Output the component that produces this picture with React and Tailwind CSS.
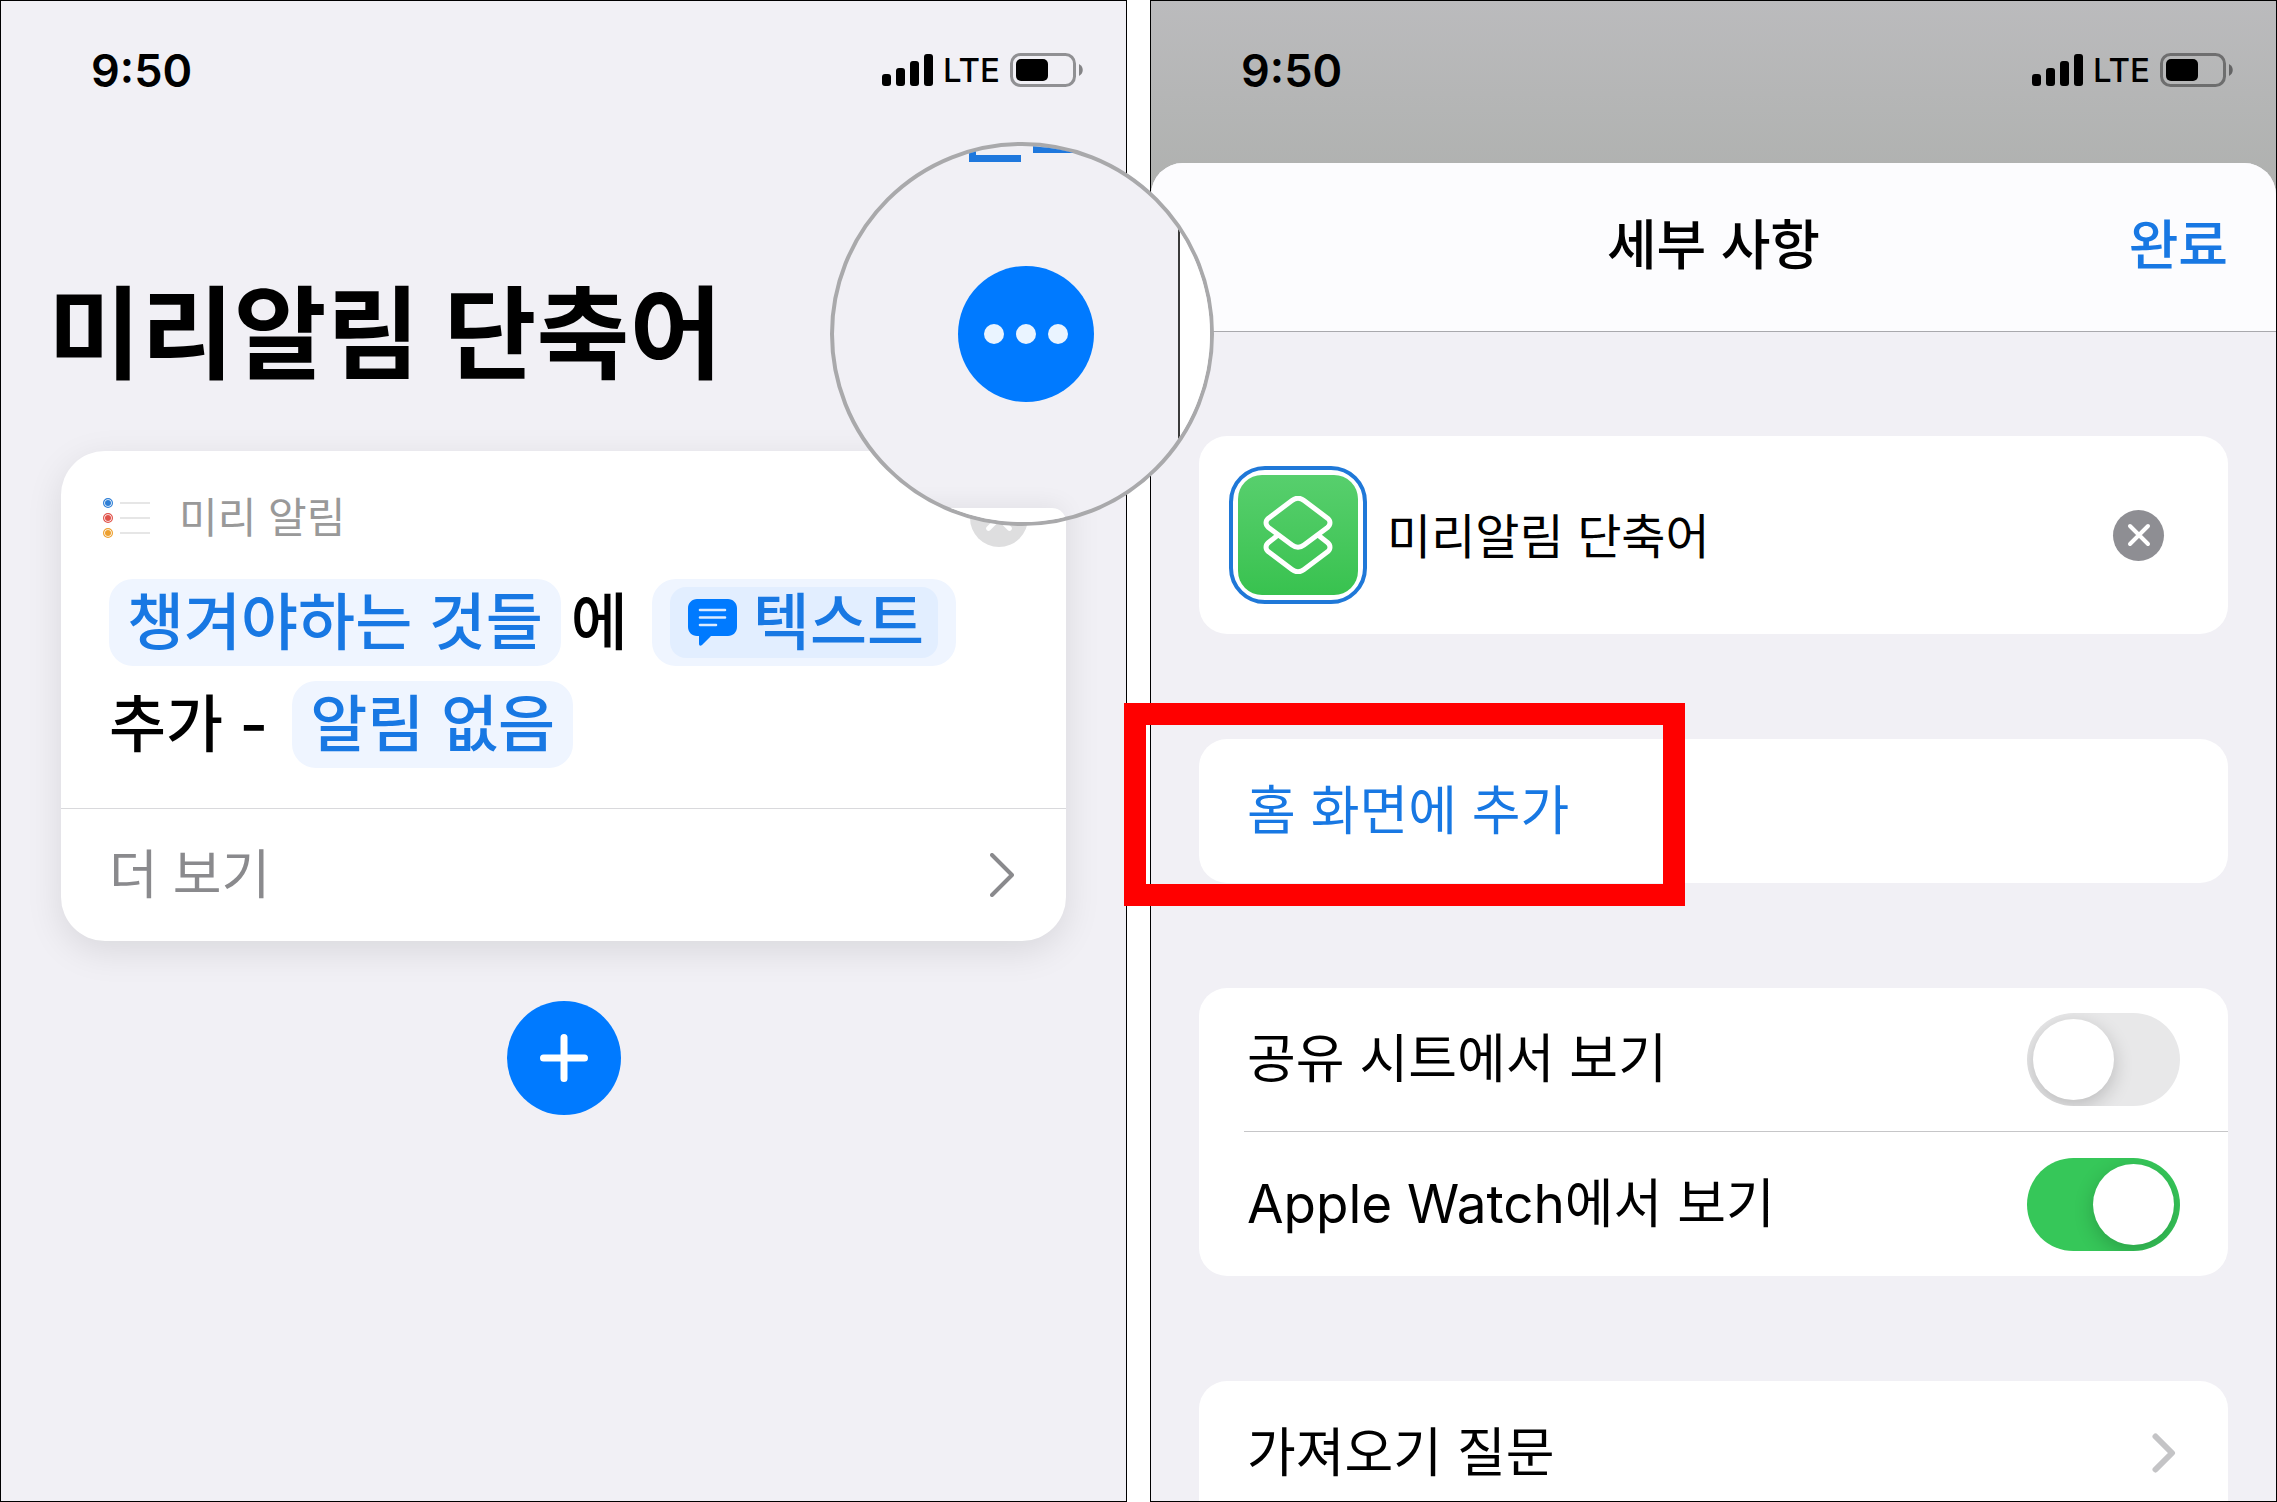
import { useState } from "react";

function StatusBar() {
  return (
    <div className="flex h-[138px] shrink-0 items-center justify-between pl-[90px] pr-[43px] text-black">
      <span className="text-[45px] font-semibold leading-none">9:50</span>
      <div className="flex items-center gap-[10px]">
        <svg className="h-8 w-[51px]" viewBox="0 0 51 32" fill="currentColor">
          <rect x="0" y="20" width="9" height="12" rx="3" />
          <rect x="14" y="14" width="9" height="18" rx="3" />
          <rect x="28" y="7" width="9" height="25" rx="3" />
          <rect x="42" y="0" width="9" height="32" rx="3" />
        </svg>
        <span className="text-[33px] font-medium leading-none">LTE</span>
        <svg className="h-[34px] w-[73px]" viewBox="0 0 73 34" fill="none">
          <rect x="1.5" y="1.5" width="63" height="31" rx="9" stroke="black" strokeOpacity="0.4" strokeWidth="3" />
          <rect x="6" y="6" width="32" height="22" rx="5" fill="black" />
          <path d="M69 11c5 2.500 5 9.500 0 12z" fill="black" fillOpacity="0.45" />
        </svg>
      </div>
    </div>
  );
}

function RemindersIcon() {
  const rows = [
    { y: 5, color: "#2f7fd6" },
    { y: 20, color: "#e0524a" },
    { y: 35, color: "#eda02f" },
  ];
  return (
    <svg className="h-10 w-12" viewBox="0 0 48 40" fill="none">
      {rows.map((r) => (
        <g key={r.y}>
          <circle cx="5" cy={r.y} r="4.400" stroke={r.color} strokeWidth="1.200" />
          <circle cx="5" cy={r.y} r="3" fill={r.color} />
          <path d={`M17 ${r.y}h30`} stroke="#dedede" strokeWidth="1.500" />
        </g>
      ))}
    </svg>
  );
}

function BubbleIcon() {
  return (
    <svg className="h-[47px] w-[49px]" viewBox="0 0 49 47" fill="none">
      <path
        d="M9 0h31c5 0 9 4 9 9v19c0 5-4 9-9 9H23l-9 9c-1.500 1.300-3 .8-3-1.200V37H9c-5 0-9-4-9-9V9c0-5 4-9 9-9z"
        fill="#007aff"
      />
      <path d="M12 11h25M12 18.500h25M12 26h16" stroke="#dcebff" strokeWidth="2.600" strokeLinecap="round" />
    </svg>
  );
}

function ShortcutsIcon() {
  return (
    <svg className="h-[78px] w-[70px]" viewBox="0 0 70 78" fill="none" stroke="white" strokeWidth="5" strokeLinejoin="round">
      <path d="M15 39 5.500 46.500c-3.300 2.800-3.300 6.500 0 9.300L29 73.500c4 3 8 3 12 0l23.500-17.700c3.300-2.800 3.300-6.500 0-9.300L55 39" />
      <path d="M29 4.500c4-3 8-3 12 0l23.500 17.700c3.300 2.800 3.300 6.500 0 9.300L41 49c-4 3-8 3-12 0L5.500 31.500c-3.300-2.800-3.300-6.500 0-9.300z" />
    </svg>
  );
}

function CloseIcon({ className }) {
  return (
    <svg className={className} viewBox="0 0 24 24" fill="none" stroke="white" strokeWidth="4" strokeLinecap="round">
      <path d="M3 3l18 18M21 3 3 21" />
    </svg>
  );
}

// Round lens over the "more" button in the top right corner
function Magnifier() {
  return (
    <div className="absolute -right-[88px] top-[141px] z-20 flex size-[384px] items-center justify-center overflow-hidden rounded-full border-4 border-[#a9a9ab] bg-[#f1f0f5]">
      <svg className="absolute left-[135px] top-0 h-4 w-[120px]" viewBox="0 0 120 16" fill="#1f78dd">
        <path d="M0 0h7v9h45v7H0zM64 0h56v7H64z" />
      </svg>
      <div className="absolute right-0 top-0 h-full w-8 border-l-2 border-[#3a3a3a] bg-white" />
      <div className="absolute bottom-0 left-0 h-[14px] w-[232px] rounded-tr-[40px] bg-white shadow-[0_0_24px_rgba(0,0,0,0.1)]" />
      <button aria-label="더 보기" className="ml-2 flex size-[136px] items-center justify-center gap-3 rounded-full bg-[#007aff]">
        <span className="size-5 rounded-full bg-[#eaf4ff]" />
        <span className="size-5 rounded-full bg-[#eaf4ff]" />
        <span className="size-5 rounded-full bg-[#eaf4ff]" />
      </button>
    </div>
  );
}

function EditorScreen() {
  return (
    <section className="relative flex flex-col border border-black bg-[#f1f0f5]">
      <StatusBar />
      <h1 className="mt-[145px] pl-[47px] text-[101px] font-bold leading-[100px]">미리알림 단축어</h1>

      <div className="mx-[60px] mt-[67px] rounded-[44px] bg-white shadow-[0_10px_36px_rgba(0,0,0,0.1)]">
        <div className="border-b border-[#d9d9dc] pb-10 pt-[38px]">
          <div className="flex h-[58px] items-center pl-[42px] pr-[38px]">
            <RemindersIcon />
            <span className="ml-7 text-[42px] leading-none text-[#999999]">미리 알림</span>
            <button aria-label="삭제" className="ml-auto flex size-[58px] items-center justify-center rounded-full bg-[#dededf]">
              <CloseIcon className="size-7" />
            </button>
          </div>

          <div className="mt-8 flex flex-col gap-[15px] pl-12 text-[62px] font-medium leading-none">
            <div className="flex h-[87px] items-center">
              <button className="h-full rounded-3xl bg-[#eff5ff] px-[18px] text-[#1878e3]">챙겨야하는 것들</button>
              <span className="ml-[10px]">에</span>
              <button className="ml-6 flex h-full items-center rounded-3xl bg-[#eff5ff] px-[18px] text-[#1878e3]">
                <span className="flex h-[71px] items-center gap-4 rounded-2xl bg-[#e2eeff] pl-[18px] pr-[14px]">
                  <BubbleIcon />
                  텍스트
                </span>
              </button>
            </div>
            <div className="flex h-[87px] items-center">
              <span>추가 -</span>
              <button className="ml-6 h-full rounded-3xl bg-[#eff5ff] px-[18px] text-[#1878e3]">알림 없음</button>
            </div>
          </div>
        </div>

        <button className="flex h-[132px] w-full items-center justify-between pl-12 pr-[52px] text-[53px] leading-none text-[#8a8a8d]">
          더 보기
          <svg className="h-11 w-6" viewBox="0 0 24 44" fill="none" stroke="currentColor" strokeWidth="4" strokeLinecap="round" strokeLinejoin="round">
            <path d="M2 2l20 20L2 42" />
          </svg>
        </button>
      </div>

      <button aria-label="동작 추가" className="mx-auto mt-[60px] flex size-[114px] items-center justify-center rounded-full bg-[#007aff]">
        <svg className="size-12" viewBox="0 0 48 48" stroke="white" strokeWidth="7" strokeLinecap="round">
          <path d="M24 3.500v41M3.500 24h41" />
        </svg>
      </button>

      <Magnifier />
    </section>
  );
}

function SwitchRow({ id, label, checked, onChange }) {
  return (
    <div className="flex h-full items-center justify-between pr-12">
      <label htmlFor={id}>{label}</label>
      <input
        id={id}
        type="checkbox"
        checked={checked}
        onChange={(e) => onChange(e.target.checked)}
        className="flex h-[93px] w-[153px] appearance-none items-center overflow-hidden rounded-full bg-[#e8e8e9] px-[6px] before:size-[81px] before:rounded-full before:bg-white before:shadow-[0_6px_20px_rgba(0,0,0,0.2)] checked:justify-end checked:bg-[#36c759]"
      />
    </div>
  );
}

function DetailsGroups() {
  const [name, setName] = useState("미리알림 단축어");
  const [shareSheet, setShareSheet] = useState(false);
  const [watch, setWatch] = useState(true);

  return (
    <div className="flex min-h-0 flex-1 flex-col gap-[105px] px-12 pt-[104px] text-[53px] leading-none">
      <div className="flex h-[198px] shrink-0 items-center rounded-[28px] bg-white pl-[30px] pr-16">
        <button aria-label="아이콘" className="flex size-[138px] items-center justify-center rounded-[36px] border-4 border-[#1f78d8]">
          <span className="flex size-[120px] items-center justify-center rounded-3xl bg-linear-to-b from-[#57cf6d] to-[#38c24f]">
            <ShortcutsIcon />
          </span>
        </button>
        <input
          aria-label="이름"
          value={name}
          onChange={(e) => setName(e.target.value)}
          className="ml-5 h-16 min-w-0 flex-1 bg-transparent pb-1 text-[48px] leading-none outline-none"
        />
        <button
          aria-label="지우기"
          onClick={() => setName("")}
          className="flex size-[51px] items-center justify-center rounded-full bg-[#8e8e93]"
        >
          <CloseIcon className="size-6" />
        </button>
      </div>

      <div className="relative h-36 shrink-0 rounded-[28px] bg-white">
        <button className="h-full w-full pl-12 text-left text-[#1878e3]">홈 화면에 추가</button>
        <div className="pointer-events-none absolute -left-[75px] -top-9 h-[203px] w-[561px] border-[22px] border-[#ff0000]" />
      </div>

      <div className="shrink-0 rounded-[28px] bg-white pl-[45px]">
        <div className="h-36 border-b border-[#c6c6c8] pl-[3px]">
          <SwitchRow id="share-sheet" label="공유 시트에서 보기" checked={shareSheet} onChange={setShareSheet} />
        </div>
        <div className="h-36 pl-[3px]">
          <SwitchRow id="apple-watch" label="Apple Watch에서 보기" checked={watch} onChange={setWatch} />
        </div>
      </div>

      <div className="min-h-0 flex-1 overflow-hidden rounded-t-[28px] bg-white">
        <button className="flex h-36 w-full items-center justify-between pl-12 pr-[52px]">
          가져오기 질문
          <svg className="h-10 w-6 text-[#c4c4c6]" viewBox="0 0 24 40" fill="none" stroke="currentColor" strokeWidth="6" strokeLinecap="round" strokeLinejoin="round">
            <path d="M3.500 3.500 20 20 3.500 36.500" />
          </svg>
        </button>
      </div>
    </div>
  );
}

function DetailsScreen() {
  return (
    <section className="flex flex-col border border-black bg-linear-to-b from-[#bbbbbd] to-[#aeb0ae] to-[200px]">
      <StatusBar />
      <div className="mt-6 flex min-h-0 flex-1 flex-col rounded-t-[32px] bg-[#f1f0f5]">
        <header className="grid h-[169px] shrink-0 grid-cols-[1fr_auto_1fr] items-center rounded-t-[32px] bg-[#fcfcfe] px-12 pb-1 text-[54px] font-medium leading-none">
          <h2 className="col-start-2">세부 사항</h2>
          <button className="justify-self-end text-[#1878e3]">완료</button>
        </header>
        <hr className="-mt-px border-[#a9a9ad]" />
        <DetailsGroups />
      </div>
    </section>
  );
}

export default function App() {
  return (
    <main className="grid h-screen min-h-[1100px] grid-cols-2 grid-rows-1 gap-[23px] overflow-hidden bg-white font-['Inter','Noto_Sans_CJK_KR',sans-serif] text-black">
      <EditorScreen />
      <DetailsScreen />
    </main>
  );
}
